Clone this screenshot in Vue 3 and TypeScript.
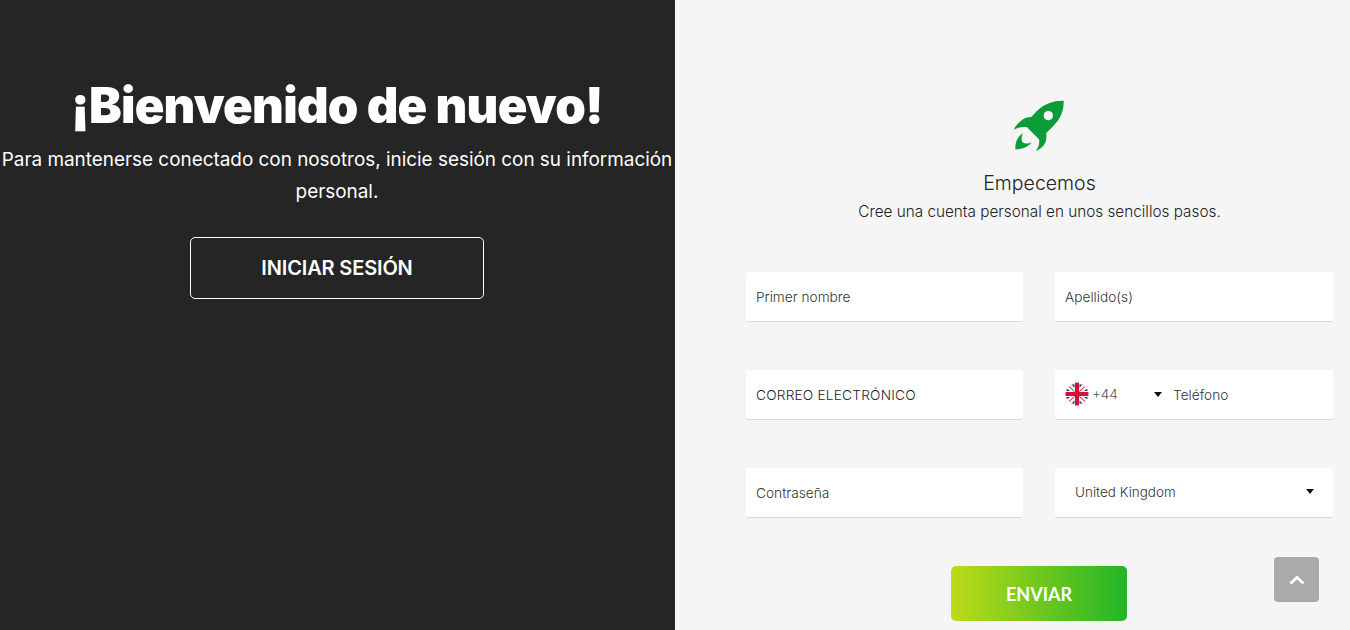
<script setup lang="ts">
const nameFields = ["Primer nombre", "Apellido(s)"];
</script>

<template>
  <div class="page">
    <section class="welcome">
      <h1>¡Bienvenido de nuevo!</h1>
      <p>Para mantenerse conectado con nosotros, inicie sesión con su información personal.</p>
      <button class="login" type="button">INICIAR SESIÓN</button>
    </section>

    <section class="signup">
      <form class="form" @submit.prevent>
        <svg class="rocket" viewBox="160 60 156 156" aria-hidden="true">
          <path
            d="M312 62C284 61 254 70 231 94L215 111C196 110 176 124 162 149C176 142 190 140 202 142L238 178C240 190 238 200 228 213C250 205 265 186 259 160L281 138C305 114 313 88 312 62Z"
            fill="#0b9b37"
          />
          <circle cx="266" cy="107" r="14" fill="#f5f5f5" />
          <path d="M189 159C172 172 166 190 167 208C186 209 205 202 216 187C206 192 196 192 188 186C184 178 186 168 189 159Z" fill="#0b9b37" />
        </svg>
        <h2>Empecemos</h2>
        <p class="lead">Cree una cuenta personal en unos sencillos pasos.</p>

        <div class="grid">
          <div v-for="label in nameFields" :key="label" class="field">
            <input type="text" :placeholder="label" />
          </div>

          <div class="field">
            <input class="strong" type="email" placeholder="CORREO ELECTRÓNICO" />
          </div>

          <div class="field phone">
            <div class="dial">
              <svg class="flag" viewBox="0 0 24 24" aria-hidden="true">
                <clipPath id="flag-clip"><circle cx="12" cy="12" r="11.5" /></clipPath>
                <g clip-path="url(#flag-clip)">
                  <rect width="24" height="24" fill="#f4f4f4" />
                  <path d="M6.5 2.5L9.5 2.5V5.5ZM17.5 2.5L14.5 2.5V5.5ZM6.5 21.5H9.5V18.5ZM17.5 21.5H14.5V18.5ZM1.5 6.5L5 9H1.5ZM22.5 6.5L19 9H22.5ZM1.5 17.5L5 15H1.5ZM22.5 17.5L19 15H22.5Z" fill="#26396f" />
                  <path d="M4 4.5L9.5 9.5M20 4.5L14.5 9.5M4 19.5L9.5 14.5M20 19.5L14.5 14.5" stroke="#d80f35" stroke-width="1" />
                  <path d="M10 0H14V10H24V14H14V24H10V14H0V10H10Z" fill="#d80f35" />
                </g>
              </svg>
              <span class="code">+44</span>
              <span class="caret"></span>
            </div>
            <input type="tel" placeholder="Teléfono" />
          </div>

          <div class="field">
            <input type="password" placeholder="Contraseña" />
          </div>

          <div class="field country">
            <span>United Kingdom</span>
            <span class="caret"></span>
          </div>
        </div>

        <button class="submit" type="submit">ENVIAR</button>
      </form>
    </section>

    <button class="to-top" type="button" aria-label="Volver arriba">
      <svg viewBox="0 0 16 10" aria-hidden="true">
        <path d="M1.5 8.5L8 2.5L14.5 8.5" fill="none" stroke="#fff" stroke-width="2.8" />
      </svg>
    </button>
  </div>
</template>

<style scoped>
.page {
  position: relative;
  display: grid;
  grid-template-columns: 675px 675px;
  height: 630px;
  overflow: hidden;
  font-family: Inter, "Liberation Sans", sans-serif;
}

.welcome {
  background: #252525;
  color: #fff;
  text-align: center;
  padding: 73px 1px 0 0;
  display: flex;
  flex-direction: column;
  align-items: center;
}

.welcome h1 {
  margin: 0;
  font-size: 49px;
  line-height: 66px;
  font-weight: 900;
  letter-spacing: -0.75px;
}

.welcome p {
  margin: 5px 0 0;
  width: 674px;
  font-size: 18.9px;
  line-height: 32px;
  font-weight: 400;
}

.login {
  margin-top: 29px;
  width: 294px;
  height: 62px;
  background: transparent;
  border: 1px solid #fff;
  border-radius: 5px;
  color: #fff;
  font: 600 20px Inter, "Liberation Sans", sans-serif;
  letter-spacing: -0.15px;
}

.signup {
  background: #f5f5f5;
  padding: 100px 17px 0 71px;
}

.form {
  display: flex;
  flex-direction: column;
  align-items: center;
  color: #222;
}

.rocket {
  width: 52px;
  height: 52px;
  display: block;
  margin-right: 1px;
}

.form h2 {
  margin: 19px 0 0;
  font-size: 19.5px;
  line-height: 24px;
  font-weight: 300;
}

.lead {
  margin: 7px 0 0;
  font-size: 15.3px;
  line-height: 20px;
  font-weight: 300;
}

.grid {
  margin-top: 50px;
  width: 100%;
  display: grid;
  grid-template-columns: 277px 278px;
  column-gap: 32px;
  row-gap: 48px;
}

.field {
  height: 50px;
  box-sizing: border-box;
  background: #fff;
  border-bottom: 1px solid #d9d9d9;
  border-radius: 2px;
  display: flex;
  align-items: center;
}

input {
  flex: 1;
  min-width: 0;
  height: 100%;
  box-sizing: border-box;
  padding: 0 10px;
  border: 0;
  outline: 0;
  background: transparent;
  font: 300 13.7px Inter, "Liberation Sans", sans-serif;
  color: #333;
}

input::placeholder {
  color: #333;
  opacity: 1;
}

input.strong {
  letter-spacing: 0.2px;
}

input.strong::placeholder {
  color: #1f1f1f;
}

.phone input {
  padding-left: 10px;
}

.dial {
  display: flex;
  align-items: center;
  width: 108px;
  padding: 0 0 1px 10px;
  box-sizing: border-box;
  flex: none;
}

.flag {
  width: 24px;
  height: 24px;
  flex: none;
}

.code {
  margin-left: 3px;
  font-size: 13.5px;
  font-weight: 300;
  color: #555;
}

.caret {
  width: 0;
  height: 0;
  border-left: 4.5px solid transparent;
  border-right: 4.5px solid transparent;
  border-top: 5px solid #111;
}

.dial .caret {
  margin-left: auto;
  margin-right: 1px;
}

.country {
  justify-content: space-between;
  padding: 0 19px 2px 20px;
  font-size: 13.5px;
  font-weight: 300;
  color: #333;
}

.submit {
  margin: 48px 1px 0 0;
  width: 176px;
  height: 55px;
  border: 0;
  border-radius: 5px;
  background: linear-gradient(90deg, #bddb17, #22b526);
  color: #fff;
  font: 700 18px Lato, "Liberation Sans", sans-serif;
}

.to-top {
  position: absolute;
  left: 1274px;
  top: 557px;
  width: 45px;
  height: 45px;
  padding: 0;
  border: 0;
  border-radius: 4px;
  background: #aaa;
  display: flex;
  align-items: center;
  justify-content: center;
}

.to-top svg {
  width: 16px;
  height: 10px;
}
</style>

<style>
body {
  margin: 0;
  background: #f5f5f5;
}
</style>
